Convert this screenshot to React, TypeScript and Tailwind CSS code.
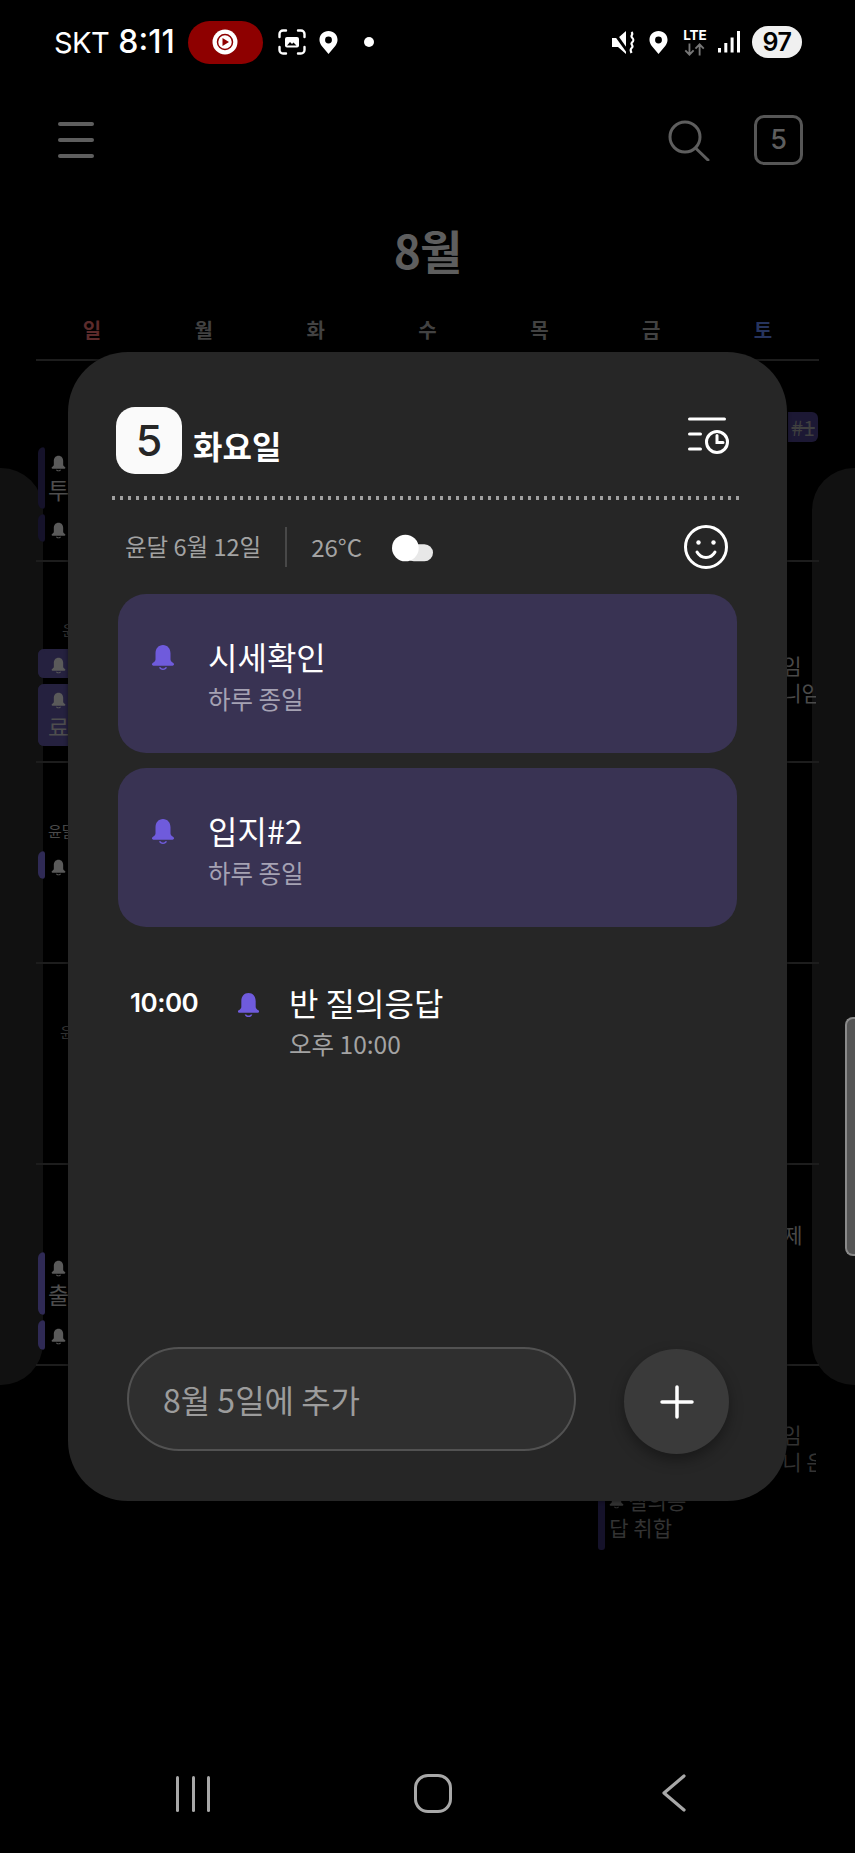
import type { ReactNode } from "react";

const font = "font-['Noto_Sans_CJK_KR','Noto_Sans',sans-serif]";

function Bell({ className }: { className: string }) {
  return (
    <svg viewBox="0 0 24 26" className={className} fill="currentColor">
      <path d="M12 0.500C7.500 0.500 4.500 4 4.500 9v6c0 1.400-1.300 2.600-2.800 3.600-1.300.9-.8 2.600.7 2.600h19.200c1.500 0 2-1.700.7-2.600-1.500-1-2.800-2.200-2.800-3.600V9c0-5-3-8.500-7.500-8.500z" />
      <path d="M8 22.800c.5 1.700 2.100 2.700 4 2.700s3.500-1 4-2.700h-1.700c-.4.8-1.300 1.200-2.300 1.200s-1.900-.4-2.300-1.200z" />
    </svg>
  );
}

function Pin({ className }: { className: string }) {
  return (
    <svg viewBox="0 0 20 24" className={className}>
      <path
        fillRule="evenodd"
        fill="#fff"
        d="M10 0C4.600 0 .5 4 .5 9.200c0 2.300.8 4.100 2.200 6.100L10 24l7.300-8.700c1.400-2 2.200-3.800 2.200-6.100C19.500 4 15.400 0 10 0zm0 5.800a3.600 3.600 0 1 1 0 7.200 3.600 3.600 0 0 1 0-7.200z"
      />
    </svg>
  );
}

function StatusBar() {
  return (
    <div className="flex h-[84px] items-center text-white">
      <span className="ml-[54px] text-[29px] leading-none tracking-[-0.5px] font-['Inter',sans-serif]">SKT</span>
      <span className="ml-[9px] text-[32px] leading-none font-medium font-['Inter',sans-serif]">8:11</span>
      <div className="ml-[13px] flex h-[43px] w-[75px] items-center justify-center rounded-full bg-[#8e0000]">
        <svg viewBox="0 0 26 26" className="h-[26px] w-[26px]">
          <circle cx="13" cy="13" r="12.5" fill="#fff" />
          <circle cx="13" cy="13" r="7.5" fill="none" stroke="#8e0000" strokeWidth="1.5" />
          <path d="M10.500 9v8l6.500-4z" fill="#8e0000" />
        </svg>
      </div>
      <svg viewBox="0 0 28 26" className="ml-[15px] h-[26px] w-[28px]" fill="none" stroke="#fff" strokeWidth="2.4" strokeLinecap="round">
        <path d="M8 1.500H5a3.500 3.500 0 0 0-3.500 3.500v3M20 1.500h3A3.500 3.500 0 0 1 26.500 5v3M8 24.500H5A3.500 3.500 0 0 1 1.500 21v-3M20 24.500h3a3.500 3.500 0 0 0 3.500-3.500v-3" />
        <rect x="7" y="8" width="14" height="10.500" rx="2" fill="#fff" stroke="none" />
        <path d="M9 16.500l3-3.500 2 2 1.500-1.500 3 3z" fill="#000" stroke="none" />
      </svg>
      <Pin className="ml-[13px] h-[23px] w-[19px]" />
      <div className="ml-[26px] h-[10px] w-[10px] rounded-full bg-white" />

      <svg viewBox="0 0 24 23" className="ml-auto h-[23px] w-[24px]">
        <path d="M0 7h6l8-7v23l-8-7H0z" fill="#fff" />
        <path d="M1 0l15 21" stroke="#000" strokeWidth="3" />
        <path d="M19.500 1c2.500 2.500-1.500 3.500.5 5.500s2 3 0 5 2 3 0 5-1.500 3-.5 5.500" fill="none" stroke="#fff" strokeWidth="2.2" />
      </svg>
      <Pin className="ml-[13px] h-[23px] w-[19px]" />
      <div className="ml-[14px] flex w-[26px] flex-col items-center">
        <span className="text-[13.5px] leading-[12px] font-bold font-['Inter',sans-serif]">LTE</span>
        <svg viewBox="0 0 26 13" className="mt-[2px] h-[13px] w-[24px]" fill="none" stroke="#777" strokeWidth="2">
          <path d="M7 0v12M2.500 7.500L7 12l4.500-4.500M18 13V1M13.500 5.500L18 1l4.500 4.500" />
        </svg>
      </div>
      <svg viewBox="0 0 22 22" className="ml-[10px] h-[22px] w-[22px]" fill="#fff">
        <rect x="0" y="17" width="3" height="4.5" />
        <rect x="6.3" y="12" width="3" height="9.5" />
        <rect x="12.6" y="6.5" width="3" height="15" />
        <rect x="19" y="0" width="3" height="21.5" />
      </svg>
      <div className="mr-[53px] ml-[12px] flex h-[32px] w-[50px] items-center justify-center rounded-full bg-[#f0f0f0] text-[25px] leading-none font-semibold tracking-[-0.5px] text-black font-['Inter',sans-serif]">
        97
      </div>
    </div>
  );
}

function AppBar() {
  return (
    <div className="flex h-[112px] items-center pr-[52px] pl-[58px]">
      <div className="flex w-[36px] flex-col gap-[12.5px]">
        <div className="h-[3.5px] rounded-full bg-[#5e5e5e]" />
        <div className="h-[3.5px] rounded-full bg-[#5e5e5e]" />
        <div className="h-[3.5px] rounded-full bg-[#5e5e5e]" />
      </div>
      <svg viewBox="0 0 42 41" className="mr-[44px] ml-auto h-[41px] w-[42px]" fill="none" stroke="#5e5e5e" strokeWidth="3" strokeLinecap="round">
        <circle cx="17" cy="17" r="15" />
        <path d="M27.500 28l12.500 12" />
      </svg>
      <div className="flex h-[50px] w-[49px] items-center justify-center rounded-[10px] border-[3px] border-[#565656] text-[27px] font-medium text-[#5e5e5e] font-['Inter',sans-serif]">
        5
      </div>
    </div>
  );
}

const weekdays = [
  { label: "일", color: "text-[#5c2b2b]" },
  { label: "월", color: "text-[#424242]" },
  { label: "화", color: "text-[#424242]" },
  { label: "수", color: "text-[#424242]" },
  { label: "목", color: "text-[#424242]" },
  { label: "금", color: "text-[#424242]" },
  { label: "토", color: "text-[#26345e]" },
];

function Event({
  bar,
  height,
  text,
  filled = false,
  gap = "mb-[5px]",
}: {
  bar: string;
  height: string;
  text?: string;
  filled?: boolean;
  gap?: string;
}) {
  return (
    <div className={`flex overflow-hidden rounded-[6px] ${height} ${gap} ${filled ? bar : ""}`}>
      <div className={`h-full w-[7px] shrink-0 rounded-[3px] ${bar}`} />
      <div className="ml-[3px] flex flex-col pt-[8px]">
        <Bell className="ml-[3px] h-[17px] w-[15px] text-[#5a5a5a]" />
        {text && <span className="mt-[4px] text-[23px] leading-[26px] text-[#4e4e4e]">{text}</span>}
      </div>
    </div>
  );
}

function WeekRow({ first, sixth, last }: { first?: ReactNode; sixth?: ReactNode; last?: ReactNode }) {
  return (
    <div className="grid h-[201px] grid-cols-7 border-t-2 border-[#1d1d1d]">
      <div className="pl-[2px]">{first}</div>
      <div />
      <div />
      <div />
      <div />
      <div className="pl-[3px]">{sixth}</div>
      <div>{last}</div>
    </div>
  );
}

function Calendar() {
  return (
    <div className="relative">
      <div className="flex h-[107px] items-start justify-center pt-[27px] text-[46px] leading-[52px] font-bold tracking-[-1px] text-[#5e5e5e]">8월</div>
      <div className="mx-[36px] grid h-[56px] grid-cols-7 text-center text-[20px] leading-[30px] font-bold">
        {weekdays.map((d) => (
          <div key={d.label} className={`pt-[12px] ${d.color}`}>
            {d.label}
          </div>
        ))}
      </div>
      <div className="mx-[36px]">
        <WeekRow
          first={
            <div className="pt-[86px]">
              <Event bar="bg-[#15122a]" height="h-[62px]" text="투" />
              <Event bar="bg-[#15122a]" height="h-[28px]" />
            </div>
          }
          last={
            <div className="mt-[51px] ml-[81px] flex h-[30px] w-[30px] items-center justify-center rounded-r-[6px] bg-[#1c1834] text-[21px] leading-none text-[#3f3f3f] line-through">
              #1
            </div>
          }
        />
        <WeekRow
          first={
            <div>
              <div className="h-[87px] pt-[58px] pl-[24px] text-[15px] leading-[20px] text-[#333]">윤</div>
              <Event bar="bg-[#25213f]" height="h-[29px]" filled gap="mb-[6px]" />
              <Event bar="bg-[#25213f]" height="h-[62px]" filled text="료" />
            </div>
          }
          last={
            <div className="mt-[90px] ml-[75px] w-[34px] overflow-hidden text-[21px] leading-[27px] whitespace-nowrap text-[#4a4a4a]">
              임
              <br />
              니임
            </div>
          }
        />
        <WeekRow
          first={
            <div>
              <div className="h-[88px] pt-[58px] pl-[10px] text-[15px] leading-[20px] text-[#4a4a4a]">윤달</div>
              <Event bar="bg-[#2f2a55]" height="h-[28px]" />
            </div>
          }
        />
        <WeekRow first={<div className="pt-[58px] pl-[22px] text-[15px] leading-[20px] text-[#333]">윤</div>} />
        <WeekRow
          first={
            <div className="pt-[87px]">
              <Event bar="bg-[#2f2a55]" height="h-[63px]" text="출" />
              <Event bar="bg-[#2f2a55]" height="h-[30px]" />
            </div>
          }
          last={<div className="pt-[54px] pl-[76px] text-[21px] leading-[30px] text-[#4a4a4a]">제</div>}
        />
        <WeekRow
          sixth={
            <div className="flex pt-[112px]">
              <div className="h-[72px] w-[7px] shrink-0 rounded-[3px] bg-[#15122a]" />
              <div className="mt-[9px] ml-[4px] text-[21px] leading-[27px] whitespace-nowrap text-[#333]">
                <div className="flex items-center gap-[4px]">
                  <Bell className="h-[17px] w-[15px] text-[#333]" />
                  질의응
                </div>
                답 취합
              </div>
            </div>
          }
          last={
            <div className="mt-[55px] ml-[75px] w-[34px] overflow-hidden text-[21px] leading-[27px] whitespace-nowrap text-[#333]">
              임
              <br />니 은
            </div>
          }
        />
      </div>
    </div>
  );
}

function ScheduleCard({ title }: { title: string }) {
  return (
    <div className="flex h-[159px] items-start rounded-[28px] bg-[#393353] pt-[44px] pl-[33px]">
      <Bell className="mt-[6px] h-[27px] w-[24px] text-[#6f5bdc]" />
      <div className="ml-[33px]">
        <div className="text-[32px] leading-[36px] text-white">{title}</div>
        <div className="mt-[11px] text-[24.5px] leading-[28px] text-[#a5a2b3]">하루 종일</div>
      </div>
    </div>
  );
}

function Modal() {
  return (
    <div className="absolute top-[352px] left-[68px] flex h-[1149px] w-[719px] flex-col rounded-[60px] bg-[#262626] shadow-[0_0_4px_rgba(0,0,0,0.5)]">
      <div className="flex items-start pt-[55px] pr-[58px] pl-[48px]">
        <div className="flex h-[67px] w-[66px] items-center justify-center rounded-[19px] bg-[#fafafa] text-[43px] leading-none font-medium text-[#262626] font-['Inter',sans-serif]">
          5
        </div>
        <div className="mt-[17px] ml-[11px] text-[32px] leading-[42px] font-bold text-white">화요일</div>
        <svg viewBox="0 0 41 37" className="mt-[10px] ml-auto h-[37px] w-[41px]" fill="none" stroke="#fff" strokeWidth="3" strokeLinecap="round">
          <path d="M1.500 2h35M1.500 17h11M1.500 32h11" />
          <circle cx="29" cy="25" r="10.5" />
          <path d="M29 18.500v7h6" />
        </svg>
      </div>
      <div className="mx-[44px] mt-[22px] h-[4px] bg-[repeating-linear-gradient(90deg,#a0a0a0_0_3.5px,transparent_3.5px_8px)]" />
      <div className="flex h-[94px] items-center pr-[59px] pl-[57px]">
        <span className="text-[23.5px] leading-none text-[#a3a3a3]">윤달 6월 12일</span>
        <div className="mx-[24px] h-[40px] w-[2px] bg-[#484848]" />
        <span className="text-[24px] leading-none text-[#a3a3a3]">26°C</span>
        <svg viewBox="0 0 43 28" className="mt-[2px] ml-[30px] h-[28px] w-[41px]">
          <rect x="14" y="10" width="29" height="18" rx="9" fill="#e8e8e8" />
          <circle cx="14" cy="14" r="14" fill="#fff" />
        </svg>
        <svg viewBox="0 0 44 44" className="ml-auto h-[44px] w-[44px]" fill="none" stroke="#fff" strokeWidth="3">
          <circle cx="22" cy="22" r="20.5" />
          <circle cx="14.5" cy="17.5" r="2.2" fill="#fff" stroke="none" />
          <circle cx="29.5" cy="17.5" r="2.2" fill="#fff" stroke="none" />
          <path d="M13 27c2 3.500 5.200 5.500 9 5.500s7-2 9-5.500" strokeLinecap="round" />
        </svg>
      </div>
      <div className="mx-[50px] flex flex-col gap-[15px]">
        <ScheduleCard title="시세확인" />
        <ScheduleCard title="입지#2" />
      </div>
      <div className="mt-[45px] flex items-start pl-[62px]">
        <div className="mt-[15px] w-[69px] text-[26px] leading-[32px] font-semibold tracking-[-0.5px] text-white font-['Inter',sans-serif]">10:00</div>
        <Bell className="mt-[20px] ml-[38px] h-[26px] w-[23px] text-[#6f5bdc]" />
        <div className="mt-[12px] ml-[29px]">
          <div className="text-[32px] leading-[36px] text-white">반 질의응답</div>
          <div className="mt-[10px] text-[24.5px] leading-[28px] text-[#a3a3a3]">오후 10:00</div>
        </div>
      </div>
      <div className="mt-auto mb-[47px] flex items-start justify-between pr-[58px] pl-[59px]">
        <div className="flex h-[104px] w-[449px] items-center rounded-full border-2 border-[#525252] bg-[#2f2f2f] pl-[34px] text-[32px] leading-none text-[#9c9c9c]">
          8월 5일에 추가
        </div>
        <div className="mt-[2px] flex h-[105px] w-[105px] items-center justify-center rounded-full bg-[#3a3a3a] shadow-[0_6px_14px_rgba(0,0,0,0.35)]">
          <svg viewBox="0 0 34 34" className="h-[34px] w-[34px]" stroke="#fff" strokeWidth="3.5" strokeLinecap="round">
            <path d="M17 2v30M2 17h30" />
          </svg>
        </div>
      </div>
    </div>
  );
}

function NavBar() {
  return (
    <div className="absolute right-0 bottom-0 left-0 flex h-[113px] items-start pt-[34px]">
      <div className="ml-[176px] flex gap-[12.5px] pt-[2px]">
        <div className="h-[36px] w-[3px] rounded-full bg-[#a8a8a8]" />
        <div className="h-[36px] w-[3px] rounded-full bg-[#a8a8a8]" />
        <div className="h-[36px] w-[3px] rounded-full bg-[#a8a8a8]" />
      </div>
      <div className="ml-[204px] h-[39px] w-[38px] rounded-[14px] border-[3.5px] border-[#a8a8a8]" />
      <svg viewBox="0 0 24 38" className="ml-[210px] h-[38px] w-[24px]" fill="none" stroke="#a8a8a8" strokeWidth="3.2" strokeLinecap="round" strokeLinejoin="round">
        <path d="M22 2L2 19l20 17" />
      </svg>
    </div>
  );
}

export default function App() {
  return (
    <div className={`relative h-[1853px] w-[855px] overflow-hidden bg-black ${font}`}>
      {/* neighbouring day cards peeking out behind the calendar */}
      <div className="absolute top-[468px] left-[-60px] h-[917px] w-[103px] rounded-[42px] bg-[#111]" />
      <div className="absolute top-[468px] right-[-60px] h-[917px] w-[103px] rounded-[42px] bg-[#111]" />
      <div className="relative">
        <StatusBar />
        <AppBar />
        <Calendar />
      </div>
      <div className="absolute top-[1017px] right-0 h-[239px] w-[10px] rounded-l-[8px] border-y-2 border-l-2 border-[#8a8a8a] bg-[#555]" />
      <Modal />
      <NavBar />
    </div>
  );
}
